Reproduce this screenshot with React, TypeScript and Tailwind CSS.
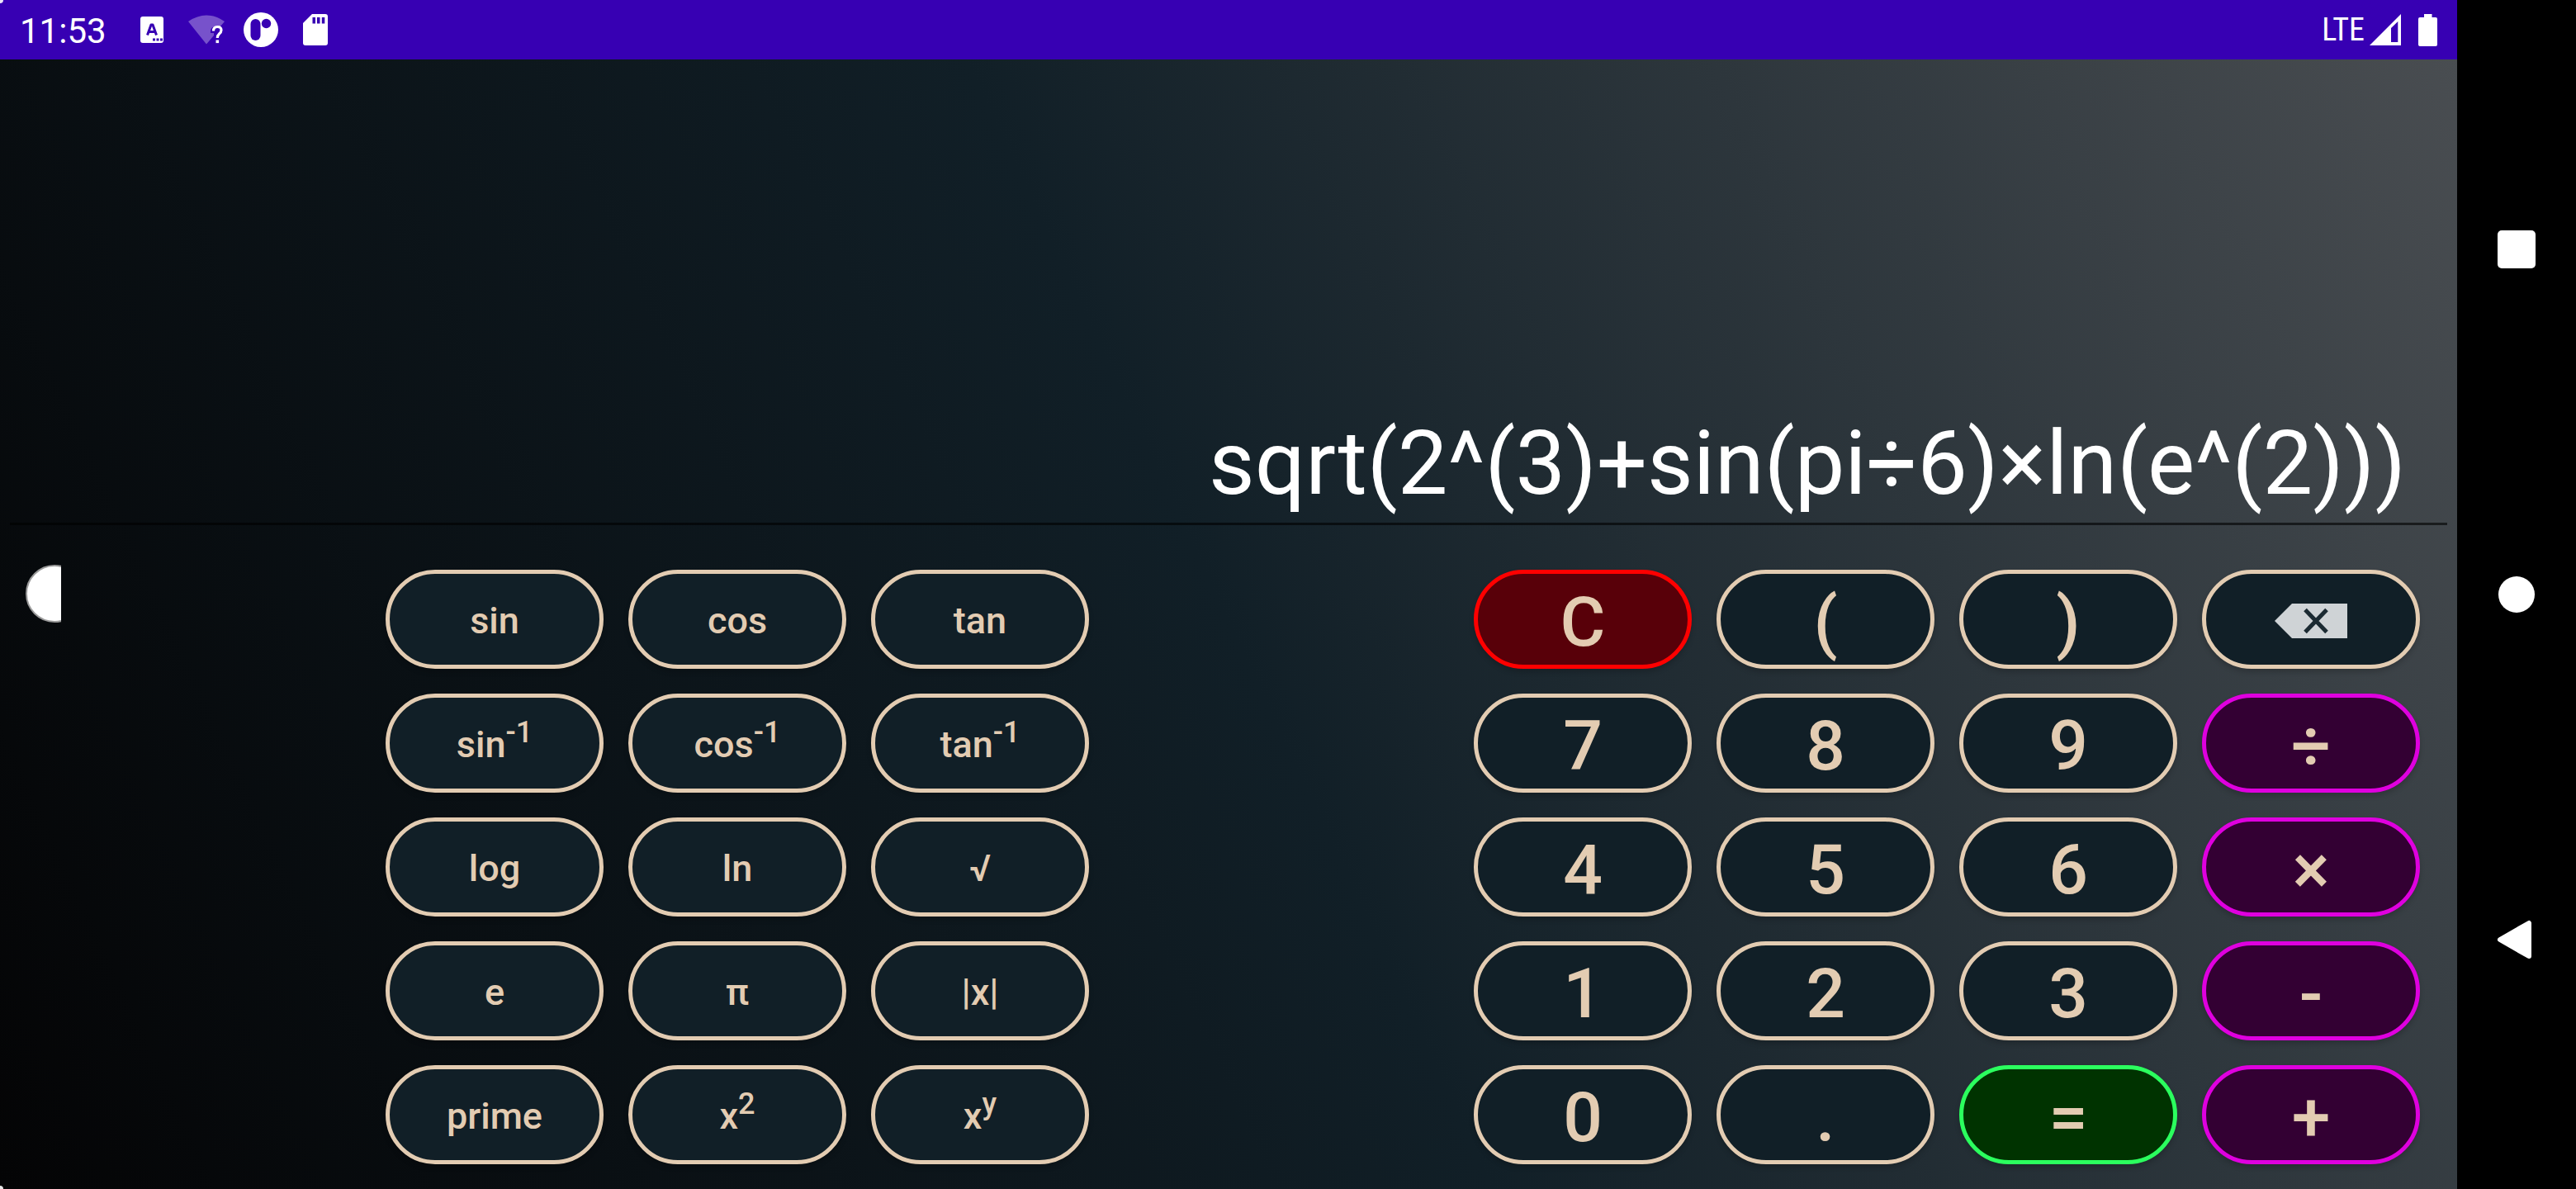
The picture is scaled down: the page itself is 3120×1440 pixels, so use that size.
import { useState } from "react";
import type { ReactNode } from "react";

type Key = { id: string; label: ReactNode; name?: string; tone?: "plain" | "clear" | "operator" | "equals" };

const TONES = {
  plain: "border-[#e3ccb2] bg-[#111f27]",
  clear: "border-[#ff0000] bg-[#580009]",
  operator: "border-[#df00df] bg-[#330033]",
  equals: "border-[#2bff5e] bg-[#003300]",
};

const Sup = ({ children }: { children: ReactNode }) => (
  <span className="relative -top-[18px] text-[36px] leading-none">{children}</span>
);

const BackspaceIcon = () => (
  <svg viewBox="0 0 88 42" className="-mt-1 h-[42px] w-[88px]" aria-hidden="true">
    <path d="M21 0H88V42H21L0 21Z" fill="#cfd3d6" />
    <path d="M37 7.500L63 34.500M63 7.500L37 34.500" stroke="#1b2a32" strokeWidth="5" fill="none" />
  </svg>
);

const FUNCTION_KEYS: Key[] = [
  { id: "sin", label: "sin" },
  { id: "cos", label: "cos" },
  { id: "tan", label: "tan" },
  { id: "asin", label: <>sin<Sup>-1</Sup></> },
  { id: "acos", label: <>cos<Sup>-1</Sup></> },
  { id: "atan", label: <>tan<Sup>-1</Sup></> },
  { id: "log", label: "log" },
  { id: "ln", label: "ln" },
  { id: "sqrt", label: "√" },
  { id: "e", label: "e" },
  { id: "pi", label: "π" },
  { id: "abs", label: "|x|" },
  { id: "prime", label: "prime" },
  { id: "square", label: <>x<Sup>2</Sup></> },
  { id: "power", label: <>x<Sup>y</Sup></> },
];

const NUMBER_KEYS: Key[] = [
  { id: "clear", label: "C", tone: "clear" },
  { id: "open", label: "(" },
  { id: "close", label: ")" },
  { id: "backspace", label: <BackspaceIcon />, name: "Backspace" },
  { id: "7", label: "7" },
  { id: "8", label: "8" },
  { id: "9", label: "9" },
  { id: "divide", label: "÷", tone: "operator" },
  { id: "4", label: "4" },
  { id: "5", label: "5" },
  { id: "6", label: "6" },
  { id: "multiply", label: "×", tone: "operator" },
  { id: "1", label: "1" },
  { id: "2", label: "2" },
  { id: "3", label: "3" },
  { id: "minus", label: "-", tone: "operator" },
  { id: "0", label: "0" },
  { id: "dot", label: "." },
  { id: "equals", label: "=", tone: "equals" },
  { id: "plus", label: "+", tone: "operator" },
];

function PadButton({ item, size }: { item: Key; size: string }) {
  return (
    <button
      type="button"
      aria-label={item.name}
      className={`flex h-[120px] items-center justify-center rounded-full border-[5px] font-medium text-[#e3ccb2] shadow-[0_4px_6px_rgba(0,0,0,0.18)] ${size} ${TONES[item.tone ?? "plain"]}`}
    >
      <span>{item.label}</span>
    </button>
  );
}

function StatusBar() {
  return (
    <header className="flex h-[72px] items-center bg-[#3700b3] pr-6 pl-6 text-white">
      <span className="w-[146px] pt-1 text-[42px] leading-none">11:53</span>
      <div className="flex items-center" aria-hidden="true">
        <svg viewBox="0 0 28 32" className="h-8 w-7">
          <rect width="28" height="32" rx="3" fill="#fff" />
          <path d="M8.500 22.500L13 10H15L19.500 22.500M10 18.500H18" stroke="#3700b3" strokeWidth="3" fill="none" strokeLinejoin="round" />
          <path d="M15 26.500h3v3h-3zM19.500 26.500h3v3h-3zM24 26.500h3v3h-3z" fill="#3700b3" />
        </svg>
        <svg viewBox="0 0 44 36" className="ml-[30px] h-9 w-11">
          <path d="M0 8Q22 -7 44 8L38 15Q26 12 27 22H31V25L22 35.500Z" fill="#fff" fillOpacity="0.32" />
          <path d="M30.500 19.500Q30.500 14.500 35.300 14.500Q40 14.500 40 18.500Q40 21 37.500 23Q35.300 25 35.300 28" stroke="#fff" strokeWidth="3.200" fill="none" />
          <rect x="33.500" y="30.500" width="3.600" height="3.600" fill="#fff" />
        </svg>
        <svg viewBox="0 0 42 42" className="ml-[23px] h-[42px] w-[42px]">
          <circle cx="21" cy="21" r="21" fill="#fff" />
          <rect x="8.500" y="8" width="12" height="26" rx="6" fill="#3700b3" />
          <circle cx="27.500" cy="13.500" r="5.700" fill="#3700b3" />
        </svg>
        <svg viewBox="0 0 30 38" className="ml-[30px] h-[38px] w-[30px]">
          <path d="M11 0H27Q30 0 30 3V35Q30 38 27 38H3Q0 38 0 35V11Z" fill="#fff" />
          <path d="M11.500 4h3.500v7.500h-3.500zM17 4h3.500v7.500H17zM22.800 4h3.500v7.500h-3.500z" fill="#3700b3" />
        </svg>
      </div>
      <div className="ml-auto flex items-center">
        <span className="font-['Liberation_Sans_Narrow','Roboto_Condensed',Roboto,sans-serif] text-[38px] leading-none">LTE</span>
        <svg viewBox="0 0 38 38" className="ml-[6px] h-[38px] w-[38px]" aria-hidden="true">
          <path fillRule="evenodd" d="M38 0V38H0ZM34.300 9L26 17V34H34.300Z" fill="#fff" />
        </svg>
        <svg viewBox="0 0 23 39" className="ml-[21px] h-[39px] w-[23px]" aria-hidden="true">
          <path d="M7 0H16.500V4H21Q23 4 23 6V37Q23 39 21 39H2Q0 39 0 37V6Q0 4 2 4H7Z" fill="#fff" />
        </svg>
      </div>
    </header>
  );
}

function NavigationBar() {
  return (
    <nav aria-label="System navigation" className="flex w-36 flex-col items-center justify-between bg-black pt-[279px] pb-[278px]">
      <button type="button" aria-label="Recent apps" className="h-[46px] w-[46px] rounded-[5px] bg-white" />
      <button type="button" aria-label="Home" className="h-11 w-11 rounded-full bg-white" />
      <button type="button" aria-label="Back" className="h-12 w-12">
        <svg viewBox="0 0 48 48" className="h-12 w-12" aria-hidden="true">
          <path d="M4 24L39 4V44Z" fill="#fff" stroke="#fff" strokeWidth="6" strokeLinejoin="round" />
        </svg>
      </button>
    </nav>
  );
}

export default function App() {
  const [expression, setExpression] = useState("sqrt(2^(3)+sin(pi÷6)×ln(e^(2)))");

  return (
    <div className="relative flex min-h-screen w-full bg-black font-[Roboto,sans-serif]">
      <div className="flex min-w-0 flex-1 flex-col">
        <StatusBar />
        <main className="relative flex flex-1 flex-col justify-end bg-[linear-gradient(65deg,#040405_0%,#111f27_50%,#494d51_100%)] pb-[30px]">
          <div className="mx-3 border-b-[3px] border-black/60">
            <input
              aria-label="Expression"
              value={expression}
              onChange={(event) => setExpression(event.target.value)}
              className="block h-36 w-full bg-transparent pr-[50px] text-right text-[108px] text-white outline-none"
            />
          </div>
          <div className="mt-[54px] grid grid-cols-[467fr_852fr_466fr_1146fr_45fr]">
            <section aria-label="Functions" className="col-start-2 grid grid-cols-3 gap-[30px]">
              {FUNCTION_KEYS.map((item) => (
                <PadButton key={item.id} item={item} size="pt-1 text-[45px]" />
              ))}
            </section>
            <section aria-label="Numbers" className="col-start-4 grid grid-cols-4 gap-[30px]">
              {NUMBER_KEYS.map((item) => (
                <PadButton key={item.id} item={item} size="pt-2 text-[84px]" />
              ))}
            </section>
          </div>
          <div className="absolute top-[612px] left-[31px] h-[70px] w-[43px] overflow-hidden" aria-hidden="true">
            <div className="h-[70px] w-[70px] rounded-full border-2 border-[#9a9a9a] bg-white" />
          </div>
        </main>
      </div>
      <NavigationBar />
      <div className="absolute top-0 left-0 h-1 w-1 rounded-br-full bg-white/90" aria-hidden="true" />
      <div className="absolute bottom-0 left-0 h-1 w-1 rounded-tr-full bg-white/90" aria-hidden="true" />
    </div>
  );
}
